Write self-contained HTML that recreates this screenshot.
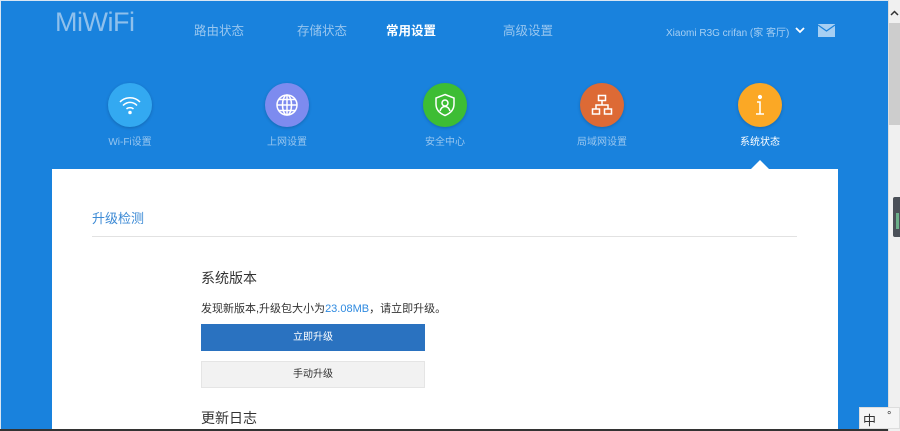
<!DOCTYPE html>
<html><head><meta charset="utf-8"><style>
*{margin:0;padding:0;box-sizing:border-box}
body{width:900px;height:431px;overflow:hidden;background:#1982dd;font-family:"Liberation Sans","Noto Sans CJK SC",sans-serif;position:relative}
.a{position:absolute;white-space:nowrap}
.nav{color:#98c6ef;font-size:12.5px;top:20px}
.c{width:44px;height:44px;border-radius:50%;top:83px;box-shadow:0 1px 3px rgba(0,0,0,.2)}
.c svg{position:absolute;left:10px;top:10px}
.lb{font-size:10px;color:#98c6ef;top:133px;width:120px;text-align:center}
</style></head><body>
<div class="a" style="left:0;top:0;width:900px;height:1px;background:#d8e6f3"></div>
<div class="a" style="left:0;top:0;width:1px;height:431px;background:#d8e6f3"></div>
<div class="a" style="left:55px;top:7px;font-size:27px;color:#8fc0ec;letter-spacing:-0.5px">MiWiFi</div>
<div class="a nav" style="left:194px">路由状态</div>
<div class="a nav" style="left:297px">存储状态</div>
<div class="a nav" style="left:386px;color:#fff;font-weight:bold">常用设置</div>
<div class="a nav" style="left:503px">高级设置</div>
<div class="a" style="left:666px;top:24px;font-size:10px;color:#a6cff3">Xiaomi R3G crifan (家 客厅)</div>
<svg class="a" style="left:795px;top:27px" width="10" height="7"><path d="M1 1l4 4 4-4" stroke="#fff" stroke-width="1.8" fill="none"/></svg>
<svg class="a" style="left:818px;top:24px" width="17" height="13"><rect width="17" height="13" fill="#a6cff3"/><path d="M0 1l8.5 6 8.5-6" stroke="#1982dd" stroke-width="1.2" fill="none"/></svg>

<div class="a c" style="left:108px;background:#33a9f1"><svg width="24" height="24" fill="none" stroke="#fff" stroke-width="1.5"><path d="M2 9a14 14 0 0 1 20 0M5 12.5a9.5 9.5 0 0 1 14 0M8.5 16a5 5 0 0 1 7 0"/><circle cx="12" cy="19.5" r="1" fill="#fff"/></svg></div>
<div class="a c" style="left:265px;background:#7d8bef"><svg width="24" height="24" fill="none" stroke="#fff" stroke-width="1.5"><circle cx="12" cy="12" r="10"/><ellipse cx="12" cy="12" rx="4.5" ry="10"/><path d="M2 12h20M4 6.5h16M4 17.5h16M12 2v20"/></svg></div>
<div class="a c" style="left:423px;background:#3dbd34"><svg width="24" height="24" fill="none" stroke="#fff" stroke-width="1.5"><path d="M12 1.5l9 3.5v6c0 6-4 9.5-9 11.5-5-2-9-5.5-9-11.5V5z"/><circle cx="12" cy="10" r="3"/><path d="M7 18c1-3 3-4.5 5-4.5s4 1.5 5 4.5"/></svg></div>
<div class="a c" style="left:580px;background:#dd6a35"><svg width="24" height="24" fill="none" stroke="#fff" stroke-width="1.5"><rect x="8.5" y="2.5" width="7" height="5"/><rect x="2.5" y="16" width="7" height="5"/><rect x="14.5" y="16" width="7" height="5"/><path d="M12 7.5v4.5M6 16v-4h12v4"/></svg></div>
<div class="a c" style="left:738px;background:#fba825"><svg width="24" height="24" fill="none" stroke="#fff" stroke-width="1.6"><circle cx="12" cy="4" r="1.3" fill="#fff"/><path d="M9 9h3v12M8 21h8"/></svg></div>
<div class="a lb" style="left:70px">Wi-Fi设置</div>
<div class="a lb" style="left:227px">上网设置</div>
<div class="a lb" style="left:385px">安全中心</div>
<div class="a lb" style="left:542px">局域网设置</div>
<div class="a lb" style="left:700px;color:#fff">系统状态</div>
<div class="a" style="left:751px;top:160px;width:0;height:0;border-left:9px solid transparent;border-right:9px solid transparent;border-bottom:9px solid #fff"></div>

<div class="a" style="left:52px;top:169px;width:786px;height:262px;background:#fff"></div>
<div class="a" style="left:92px;top:208px;font-size:13px;color:#3c8ad5">升级检测</div>
<div class="a" style="left:92px;top:236px;width:705px;height:1px;background:#e2e2e2"></div>
<div class="a" style="left:201px;top:268px;font-size:14px;color:#333">系统版本</div>
<div class="a" style="left:201px;top:300px;font-size:11px;color:#333">发现新版本,升级包大小为<span style="color:#2f8ae0">23.08MB</span>，请立即升级。</div>
<div class="a" style="left:201px;top:324px;width:224px;height:27px;background:#2a72c0;color:#fff;font-size:10px;text-align:center;line-height:27px">立即升级</div>
<div class="a" style="left:201px;top:361px;width:224px;height:27px;background:#f2f2f2;border:1px solid #e5e5e5;color:#333;font-size:10px;text-align:center;line-height:25px">手动升级</div>
<div class="a" style="left:201px;top:408px;font-size:14px;color:#333">更新日志</div>
<div class="a" style="left:0;top:429px;width:900px;height:2px;background:#333"></div>

<div class="a" style="left:888px;top:0;width:12px;height:431px;background:#f0f0f0;border-left:1px solid #ddd"></div>
<div class="a" style="left:889px;top:23px;width:11px;height:102px;background:#cdcdcd"></div>
<svg class="a" style="left:890px;top:10px" width="9" height="6"><path d="M1 5l3.5-3.5L8 5" stroke="#333" stroke-width="1.5" fill="none"/></svg>
<div class="a" style="left:893px;top:197px;width:7px;height:40px;background:#4b5058;border-radius:2px 0 0 2px"></div>
<div class="a" style="left:896px;top:213px;width:3px;height:16px;background:#6cb08a"></div>
<div class="a" style="left:859px;top:407px;width:41px;height:22px;background:#f5f5f5;border:1px solid #ddd"></div>
<div class="a" style="left:863px;top:410px;font-size:13px;color:#333">中</div>
<div class="a" style="left:887px;top:410px;font-size:11px;color:#333">°</div>
</body></html>
